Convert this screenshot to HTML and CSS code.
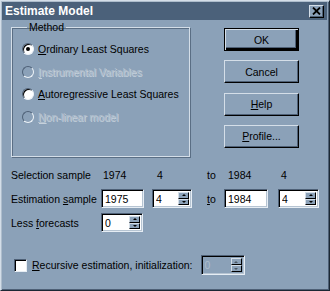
FILE: index.html
```html
<!DOCTYPE html>
<html lang="en">
  <head>
    <meta charset="UTF-8" />
    <title>Estimate Model</title>
    <link rel="stylesheet" href="styles.css">
  </head>
  <body>
    <div class="window">
      <div class="titlebar">
        <span class="title">Estimate Model</span>
        <span class="close">
          <svg width="9" height="8" viewBox="0 0 9 8">
            <path d="M1 0.5 L8 7.5 M8 0.5 L1 7.5" stroke="#000" stroke-width="1.8" />
          </svg>
        </span>
      </div>

      <div class="body">
        <div class="top">
          <fieldset class="group">
            <legend>Method</legend>
            <label class="radio"><span class="bullet on"></span><span><u>O</u>rdinary Least Squares</span></label>
            <label class="radio disabled"><span class="bullet"></span><span><u>I</u>nstrumental Variables</span></label>
            <label class="radio"><span class="bullet"></span><span><u>A</u>utoregressive Least Squares</span></label>
            <label class="radio disabled"><span class="bullet"></span><span><u>N</u>on-linear model</span></label>
          </fieldset>

          <div class="buttons">
            <button class="btn default">OK</button>
            <button class="btn">Cancel</button>
            <button class="btn"><u>H</u>elp</button>
            <button class="btn"><u>P</u>rofile...</button>
          </div>
        </div>

        <div class="samples">
          <span>Selection sample</span>
          <span class="value v1">1974</span>
          <span class="value v2">4</span>
          <span>to</span>
          <span class="value v3">1984</span>
          <span class="value v4">4</span>

          <span>Estimation <u>s</u>ample</span>
          <input class="field w43" type="text" value="1975" />
          <div class="spin w40"><input type="text" value="4" /><span class="arrows"><i class="up"></i><i class="down"></i></span></div>
          <span><u>t</u>o</span>
          <input class="field w44" type="text" value="1984" />
          <div class="spin w41"><input type="text" value="4" /><span class="arrows"><i class="up"></i><i class="down"></i></span></div>

          <span>Less <u>f</u>orecasts</span>
          <div class="spin w42"><input type="text" value="0" /><span class="arrows"><i class="up"></i><i class="down"></i></span></div>
        </div>

        <div class="recursive">
          <span class="check"></span>
          <span class="check-label"><u>R</u>ecursive estimation, initialization:</span>
          <div class="spin w44 off"><input type="text" value="0" disabled /><span class="arrows"><i class="up"></i><i class="down"></i></span></div>
        </div>
      </div>
    </div>
  </body>
</html>
```

FILE: styles.css
```css
body {
  margin: 0;
  background: #8ba1b8;
  font-family: "Liberation Sans", Arial, sans-serif;
  font-size: 10.5px;
  color: #000;
}

.window {
  box-sizing: border-box;
  width: 330px;
  height: 291px;
  background: #8ba1b8;
  border: 1px solid;
  border-color: #d4dee8 #1c2834 #1c2834 #d4dee8;
  box-shadow: inset 1px 1px #aebdcc, inset -1px -1px #4e6076;
  padding: 1px 2px 2px 1px;
}

.titlebar {
  height: 18px;
  background: #4b617a;
  display: flex;
  align-items: center;
  justify-content: space-between;
  padding: 0 3px 0 3px;
}

.title {
  color: #fff;
  font-weight: bold;
  font-size: 12px;
}

.close {
  box-sizing: border-box;
  width: 15px;
  height: 13px;
  background: #8ba1b8;
  border: 1px solid;
  border-color: #d4dee8 #000 #000 #d4dee8;
  box-shadow: inset -1px -1px #4e6076;
  display: flex;
  align-items: center;
  justify-content: center;
}

.body {
  padding: 1px 0 0 9px;
}

.top {
  display: flex;
  align-items: flex-start;
}

/* Method group */
.group {
  box-sizing: border-box;
  width: 179px;
  height: 136px;
  margin: 0;
  padding: 5px 0 0 10px;
  border: 1px solid #d4dee8;
  box-shadow: inset 1px 1px #5a6e84, 1px 1px #5a6e84;
}

.group legend {
  padding: 0 2px;
  margin-left: 5px;
  line-height: 12px;
}

.radio {
  display: flex;
  align-items: center;
  height: 22.5px;
}

.bullet {
  box-sizing: border-box;
  width: 12px;
  height: 12px;
  border-radius: 50%;
  background: #fff;
  border: 1px solid;
  border-color: #4e6076 #eef3f8 #eef3f8 #4e6076;
  box-shadow: inset 1px 1px #000;
  margin-right: 4px;
  display: flex;
  align-items: center;
  justify-content: center;
}

.bullet.on::after {
  content: "";
  width: 4px;
  height: 4px;
  border-radius: 50%;
  background: #000;
}

.disabled {
  color: #aebdcc;
  text-shadow: 1px 1px 0 #c6d1dc;
}

.disabled .bullet {
  background: #8ba1b8;
  box-shadow: none;
}

/* push buttons */
.buttons {
  display: flex;
  flex-direction: column;
  gap: 9.3px;
  margin-left: 34px;
  padding-top: 7px;
}

.btn {
  box-sizing: border-box;
  width: 75px;
  height: 23px;
  padding: 0;
  font: inherit;
  color: #000;
  background: #8ba1b8;
  border: 1px solid;
  border-color: #d4dee8 #000 #000 #d4dee8;
  box-shadow: inset -1px -1px #4e6076;
}

.btn.default {
  border: 1px solid #000;
  box-shadow: inset 1px 1px #d4dee8, inset -2px -2px #000, inset -3px -3px #4e6076;
}

/* sample grid */
.samples {
  display: grid;
  grid-template-columns: 90px 51px 55px 17px 54px 41px;
  grid-auto-rows: 19px;
  row-gap: 5px;
  align-items: center;
  margin-top: 8px;
}

.value.v1 { padding-left: 2px; }
.value.v2 { padding-left: 5px; }
.value.v3 { padding-left: 4px; }
.value.v4 { padding-left: 3px; }

.field,
.spin {
  box-sizing: border-box;
  height: 19px;
  background: #fff;
  border: 1px solid;
  border-color: #4e6076 #e6edf4 #e6edf4 #4e6076;
  box-shadow: inset 1px 1px #000, inset -1px -1px #b6c4d2;
}

.field {
  font: inherit;
  padding: 0 0 0 3px;
  outline: none;
}

.spin {
  display: flex;
  align-items: stretch;
  padding: 2px 2px 2px 2px;
}

.spin input {
  flex: 1;
  min-width: 0;
  border: 0;
  padding: 0 0 0 1px;
  font: inherit;
  background: transparent;
  outline: none;
}

.arrows {
  display: flex;
  flex-direction: column;
  width: 11px;
}

.arrows i {
  flex: 1;
  background: #8ba1b8;
  border: 1px solid;
  border-color: #d4dee8 #000 #000 #d4dee8;
  display: flex;
  align-items: center;
  justify-content: center;
}

.arrows i::after {
  content: "";
  border-left: 2px solid transparent;
  border-right: 2px solid transparent;
}

.arrows .up::after { border-bottom: 2px solid #000; }
.arrows .down::after { border-top: 2px solid #000; }

.w40 { width: 40px; }
.w41 { width: 41px; }
.w42 { width: 42px; }
.w43 { width: 43px; }
.w44 { width: 44px; }

/* recursive row */
.recursive {
  display: flex;
  align-items: center;
  margin-top: 23px;
  height: 20px;
}

.check {
  box-sizing: border-box;
  width: 13px;
  height: 13px;
  margin-left: 3px;
  background: #fff;
  border: 1px solid;
  border-color: #4e6076 #e6edf4 #e6edf4 #4e6076;
  box-shadow: inset 1px 1px #000;
}

.check-label {
  margin-left: 5px;
  margin-right: 8px;
}

.spin.off {
  background: #8ba1b8;
  height: 20px;
}

.spin.off input {
  color: #aebdcc;
}

.spin.off .arrows i::after {
  opacity: 0.45;
}
```
